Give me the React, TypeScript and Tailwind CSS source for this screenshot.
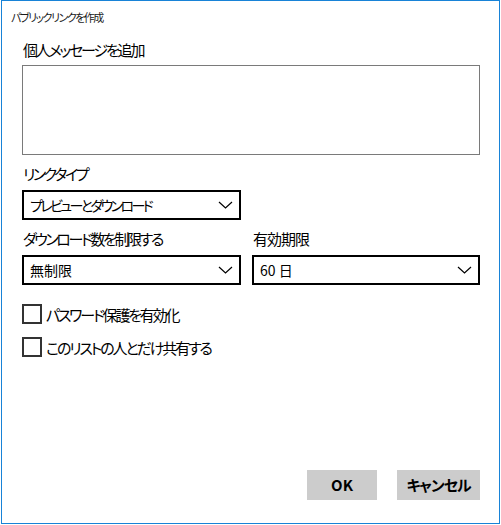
import React from "react";

const jp = "font-['Noto_Sans_CJK_JP','Noto_Sans',sans-serif] [font-feature-settings:'palt']";

function Chevron() {
  return (
    <svg width="15" height="8" viewBox="0 0 15 8" className="shrink-0">
      <polyline points="1,1 7.5,7 14,1" fill="none" stroke="#000" strokeWidth="1.2" />
    </svg>
  );
}

function Combo({ text, className = "", textClass = "" }: { text: string; className?: string; textClass?: string }) {
  return (
    <div
      className={`h-[30px] border-2 border-black flex items-center justify-between pl-[6px] pr-[6px] text-[14px] text-black ${className}`}
    >
      <span className={`leading-none ${textClass}`}>{text}</span>
      <Chevron />
    </div>
  );
}

function Check({ label, textClass = "" }: { label: string; textClass?: string }) {
  return (
    <div className="flex items-center gap-[4px] h-[20px]">
      <div className="w-[20px] h-[20px] border-2 border-[#333] bg-white shrink-0" />
      <span className={`text-[15px] text-black leading-none ${textClass}`}>{label}</span>
    </div>
  );
}

export default function App() {
  return (
    <div className={`w-[501px] h-[525px] bg-white ${jp}`}>
      <div className="ml-[1px] w-[499px] h-[524px] border border-[#1883d7] bg-white flex flex-col">
        <div className="pl-[9px] pt-[8px] text-[11px] leading-[16px] text-[#1a1a1a] tracking-[-1.5px]">パブリックリンクを作成</div>
        <div className="pl-[20px] pr-[19px] flex flex-col flex-1">
          <div className="mt-[15px] pl-[1px] text-[15px] leading-[20px] text-black tracking-[-2.2px]">個人メッセージを追加</div>
          <div className="mt-[5px] h-[90px] border border-[#7a7a7a]" />
          <div className="mt-[9px] pl-[1px] text-[15px] leading-[20px] text-black tracking-[-2.4px]">リンクタイプ</div>
          <Combo text="プレビューとダウンロード" textClass="tracking-[-2.6px]" className="mt-[6px] w-[219px]" />
          <div className="mt-[9px] flex gap-[11px]">
            <div className="flex flex-col w-[219px]">
              <div className="pl-[1px] text-[15px] leading-[20px] text-black tracking-[-2.4px]">ダウンロード数を制限する</div>
              <Combo text="無制限" className="mt-[6px]" />
            </div>
            <div className="flex flex-col flex-1">
              <div className="pl-[1px] text-[15px] leading-[20px] text-black tracking-[-1px]">有効期限</div>
              <Combo text="60 日" className="mt-[6px]" />
            </div>
          </div>
          <div className="mt-[19px] flex flex-col gap-[13px]">
            <Check label="パスワード保護を有効化" textClass="tracking-[-2.2px]" />
            <Check label="このリストの人とだけ共有する" textClass="tracking-[-2.1px]" />
          </div>
          <div className="mt-auto mb-[23px] flex justify-end gap-[20px]">
            <button className="w-[70px] h-[30px] bg-[#cccccc] text-[15px] font-bold text-black">OK</button>
            <button className="w-[83px] h-[30px] bg-[#cccccc] text-[15px] font-bold text-black tracking-[-1px]">キャンセル</button>
          </div>
        </div>
      </div>
    </div>
  );
}
